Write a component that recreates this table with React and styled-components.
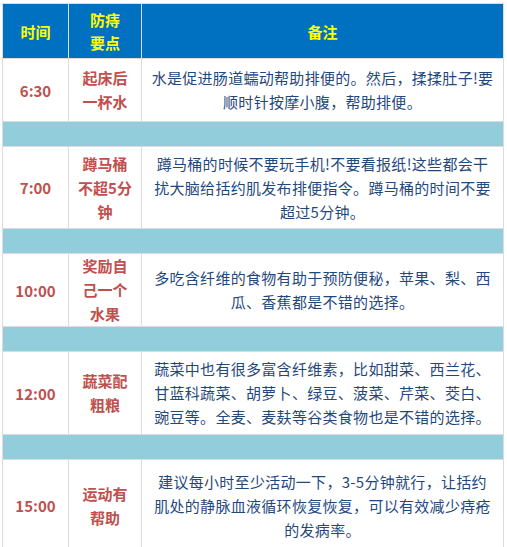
import React from 'react';
import styled, { createGlobalStyle } from 'styled-components';

const GlobalStyle = createGlobalStyle`
  html, body {
    margin: 0;
    padding: 0;
    background: #ffffff;
  }
  body {
    font-family: "Noto Sans CJK SC", "Noto Sans", sans-serif;
  }
`;

const Page = styled.div`
  padding: 3px 4px 0 2px;
`;

const Table = styled.table`
  width: 502px;
  border-collapse: collapse;
  table-layout: fixed;
  border: 1px solid #dcdcdc;
`;

const HeadRow = styled.tr`
  height: 55px;
  background: #0070c0;
`;

const HeadCell = styled.th`
  border: 1px solid #dcdcdc;
  color: #ffff00;
  font-size: 15px;
  font-weight: bold;
  line-height: 23px;
  text-align: center;
  vertical-align: middle;
  padding: 0 4px;
`;

const Row = styled.tr`
  height: ${p => p.$h}px;
  background: #ffffff;
`;

const SepRow = styled.tr`
  height: 25px;
  background: #92cddc;
`;

const SepCell = styled.td`
  border: 1px solid #dcdcdc;
  padding: 0;
`;

const TimeCell = styled.td`
  border: 1px solid #dcdcdc;
  color: #c0504d;
  font-size: 15px;
  font-weight: bold;
  text-align: center;
  vertical-align: middle;
  padding: 0;
`;

const PointCell = styled.td`
  border: 1px solid #dcdcdc;
  color: #c0504d;
  font-size: 15px;
  font-weight: bold;
  line-height: 24px;
  text-align: center;
  vertical-align: middle;
  padding: 0 4px;
`;

const NoteCell = styled.td`
  border: 1px solid #dcdcdc;
  color: #1f497d;
  font-size: 15px;
  line-height: 24px;
  letter-spacing: 0.3px;
  text-align: center;
  vertical-align: middle;
  padding: 0 4px;
  white-space: nowrap;
`;

const rows = [
  {
    time: '6:30',
    h: 63,
    point: ['起床后', '一杯水'],
    note: ['水是促进肠道蠕动帮助排便的。然后，揉揉肚子!要', '顺时针按摩小腹，帮助排便。'],
  },
  {
    time: '7:00',
    h: 82,
    point: ['蹲马桶', '不超5分', '钟'],
    note: ['蹲马桶的时候不要玩手机!不要看报纸!这些都会干', '扰大脑给括约肌发布排便指令。蹲马桶的时间不要', '超过5分钟。'],
  },
  {
    time: '10:00',
    h: 73,
    point: ['奖励自', '己一个', '水果'],
    note: ['多吃含纤维的食物有助于预防便秘，苹果、梨、西', '瓜、香蕉都是不错的选择。'],
  },
  {
    time: '12:00',
    h: 83,
    point: ['蔬菜配', '粗粮'],
    note: ['蔬菜中也有很多富含纤维素，比如甜菜、西兰花、', '甘蓝科蔬菜、胡萝卜、绿豆、菠菜、芹菜、茭白、', '豌豆等。全麦、麦麸等谷类食物也是不错的选择。'],
  },
  {
    time: '15:00',
    h: 92,
    point: ['运动有', '帮助'],
    note: ['建议每小时至少活动一下，3-5分钟就行，让括约', '肌处的静脉血液循环恢复恢复，可以有效减少痔疮', '的发病率。'],
  },
];

const lines = list => list.map((l, i) => (
  <React.Fragment key={i}>
    {i > 0 && <br />}
    {l}
  </React.Fragment>
));

export default function App() {
  return (
    <Page>
      <GlobalStyle />
      <Table>
        <colgroup>
          <col style={{ width: 66 }} />
          <col style={{ width: 73 }} />
          <col />
        </colgroup>
        <thead>
          <HeadRow>
            <HeadCell>时间</HeadCell>
            <HeadCell>防痔<br />要点</HeadCell>
            <HeadCell>备注</HeadCell>
          </HeadRow>
        </thead>
        <tbody>
          {rows.map((r, i) => (
            <React.Fragment key={r.time}>
              {i > 0 && (
                <SepRow>
                  <SepCell colSpan={3} />
                </SepRow>
              )}
              <Row $h={r.h}>
                <TimeCell>{r.time}</TimeCell>
                <PointCell>{lines(r.point)}</PointCell>
                <NoteCell>{lines(r.note)}</NoteCell>
              </Row>
            </React.Fragment>
          ))}
        </tbody>
      </Table>
    </Page>
  );
}
